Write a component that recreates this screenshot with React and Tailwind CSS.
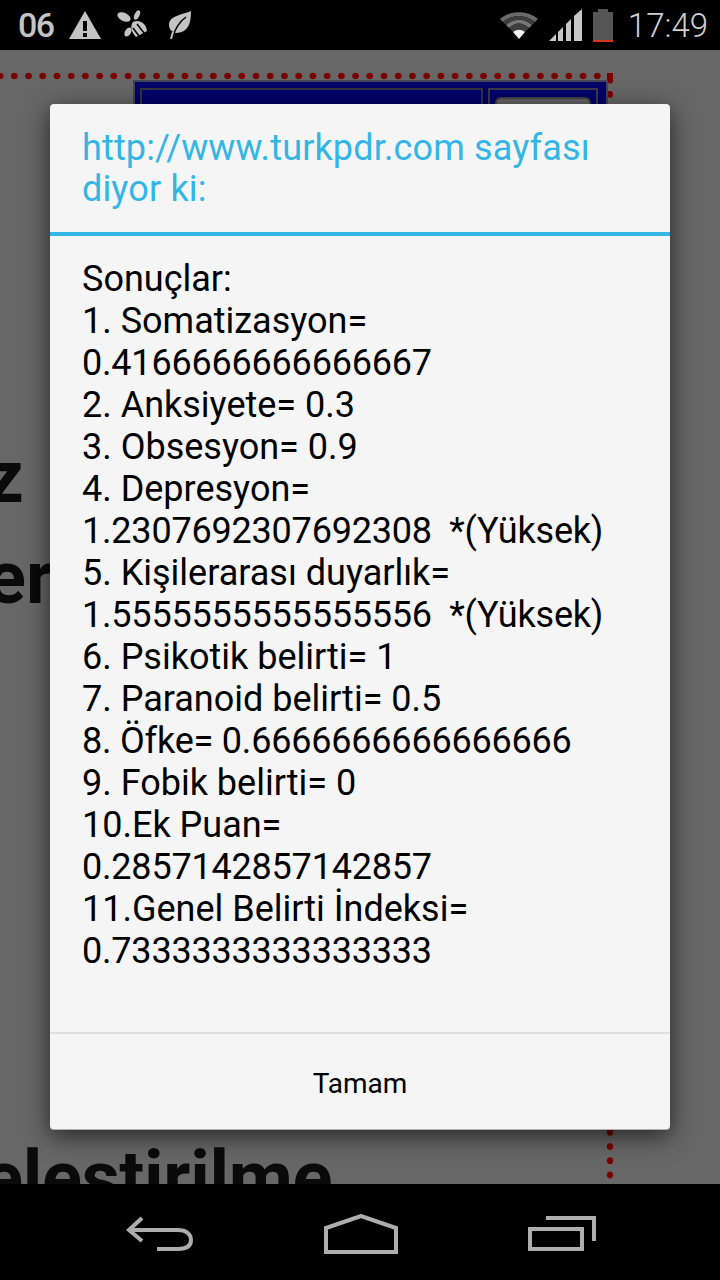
import React from "react";

const lines = [
  "Sonuçlar:",
  "1. Somatizasyon=",
  "0.4166666666666667",
  "2. Anksiyete= 0.3",
  "3. Obsesyon= 0.9",
  "4. Depresyon=",
  "1.2307692307692308  *(Yüksek)",
  "5. Kişilerarası duyarlık=",
  "1.5555555555555556  *(Yüksek)",
  "6. Psikotik belirti= 1",
  "7. Paranoid belirti= 0.5",
  "8. Öfke= 0.6666666666666666",
  "9. Fobik belirti= 0",
  "10.Ek Puan=",
  "0.2857142857142857",
  "11.Genel Belirti İndeksi=",
  "0.7333333333333333",
];

const StatusBar = () => (
  <div className="flex h-[50px] shrink-0 items-center justify-between bg-black pl-[18px] pr-[12px] text-[#c4c4c4]">
    <div className="flex items-center">
      <span className="text-[34px] font-medium leading-none tracking-[-1.5px]">06</span>
      <svg className="ml-[14px]" width="34" height="30" viewBox="0 0 34 30">
        <path d="M17 1 33 29H1Z" fill="#c4c4c4" />
        <rect x="15" y="11" width="4" height="10" fill="#000" />
        <rect x="15" y="23" width="4" height="4" fill="#000" />
      </svg>
      <svg className="ml-[15px]" width="32" height="30" viewBox="0 0 32 30" fill="#c4c4c4">
        <ellipse cx="7" cy="7" rx="7" ry="4" transform="rotate(25 7 7)" />
        <ellipse cx="20" cy="5" rx="2.5" ry="5" transform="rotate(25 20 5)" />
        <path d="M16 12C22 9 29 13 30 21L19 27C14 22 13 16 16 12Z" />
        <path d="M20 14 27 23M16 18 22 26" stroke="#000" strokeWidth="1.5" />
        <ellipse cx="11" cy="22" rx="3" ry="5" transform="rotate(30 11 22)" />
      </svg>
      <svg className="ml-[19px]" width="24" height="30" viewBox="0 0 24 30">
        <path d="M23 1C23 14 20 22 9 23 4 23 1 19 1 15 1 6 13 5 23 1Z" fill="#c4c4c4" />
        <path d="M18 7C11 12 7 18 4 29" fill="none" stroke="#000" strokeWidth="1.5" />
        <path d="M5 22 3 29" stroke="#c4c4c4" strokeWidth="2" />
      </svg>
    </div>
    <div className="flex items-center">
      <svg width="40" height="30" viewBox="0 0 40 30">
        <path d="M1 9C11 0 29 0 39 9L36 12C26 4 14 4 4 12Z" fill="#6a6a6a" />
        <path d="M7 15C15 8 25 8 33 15L30 18C23 12 17 12 10 18Z" fill="#777" />
        <path d="M4 12C14 4 26 4 36 12L33 15C25 8 15 8 7 15ZM10 18C17 12 23 12 30 18L26 22C22 19 18 19 14 22Z" fill="#3e3e3e" />
        <path d="M14 22C18 19 22 19 26 22L20 29Z" fill="#f0f0f0" />
      </svg>
      <svg className="ml-[10px]" width="34" height="33" viewBox="0 0 34 33" fill="#c8c8c8">
        <path d="M0 32 7 25V32ZM9 23 14 18V32H9ZM17 15 22 10V32H17ZM25 7 33 0V32H25Z" />
      </svg>
      <div className="ml-[10px] flex flex-col items-center">
        <div className="h-[3px] w-[10px] bg-[#555]" />
        <div className="flex h-[30px] w-[20px] flex-col justify-end bg-[#555]">
          <div className="h-[2px] bg-[#d9331f]" />
        </div>
      </div>
      <span className="ml-[15px] text-[33px] font-light leading-none text-[#d0d0d0]">17:49</span>
    </div>
  </div>
);

const Page = () => (
  <div className="relative flex-1 overflow-hidden bg-[#676767]">
    <div className="absolute left-[-7px] top-[19px] h-[14px] w-[611px] bg-[radial-gradient(circle,#7a0000_3px,transparent_3.6px)] bg-[length:14.22px_14px]" />
    <div className="absolute left-[603px] top-[23px] h-[1111px] w-[14px] bg-[radial-gradient(circle,#7a0000_3px,transparent_3.6px)] bg-[length:14px_14.22px]" />
    <div className="absolute left-[607px] top-[23px] h-[9px] w-[6px] rounded-b-[3px] bg-[#7a0000]" />
    <div className="absolute left-[133px] top-[30px] flex h-[70px] w-[475px] gap-[5px] border-2 border-[#444455] bg-[#00006a] pl-[5px] pr-[8px] pt-[6px]">
      <div className="w-[343px] border-2 border-[#333340]" />
      <div className="flex-1 border-2 border-[#3c3c48] px-[5px] pt-[7px]">
        <div className="h-full rounded-[6px] border-2 border-[#444] bg-[#666]" />
      </div>
    </div>
    <div className="absolute left-0 top-[390px] text-[74px] font-bold leading-none text-[#0a0a0a]">
      <span className="absolute left-[-14px] top-0">z</span>
      <span className="absolute left-[-14px] top-[101px]">er</span>
    </div>
    <div className="absolute left-[-17px] top-[1091px] whitespace-nowrap text-[74px] font-bold leading-none tracking-[-0.3px] text-[#0a0a0a]">
      elestirilme
    </div>
  </div>
);

const Dialog = () => (
  <div className="absolute left-[50px] top-[104px] flex h-[1026px] w-[620px] flex-col rounded-[4px] border-b border-[#b0b0b0] bg-[#f5f5f5] shadow-[0_6px_24px_rgba(0,0,0,0.65)]">
    <div className="flex h-[132px] flex-col justify-center border-b-[4px] border-[#33b5e5] px-[32px] pt-[2px] text-[36px] leading-[41px] tracking-[0.15px] text-[#33b5e5]">
      <div>http://www.turkpdr.com sayfası</div>
      <div>diyor ki:</div>
    </div>
    <div className="flex-1 whitespace-pre px-[32px] pt-[22px] text-[36px] leading-[42px] text-black">
      {lines.map(line => (
        <div key={line} className={/\d{10}/.test(line) ? "tracking-[-0.2px]" : ""}>
          {line}
        </div>
      ))}
    </div>
    <div className="flex h-[97px] items-center justify-center border-t-2 border-[#dedede] pt-[5px] text-[28px] text-black">
      Tamam
    </div>
  </div>
);

const NavBar = () => (
  <div className="flex h-[96px] shrink-0 items-center bg-black text-[#adadad]">
    <svg className="ml-[126px] mt-[4px]" width="68" height="36" viewBox="0 0 68 36" fill="none" stroke="#adadad" strokeWidth="4">
      <path d="M16 2 3 14 16 25M3 14H52C60 14 65 18 65 24 65 30 60 33 52 33H31" />
    </svg>
    <svg className="ml-[130px] mt-[4px]" width="74" height="40" viewBox="0 0 74 40" fill="none" stroke="#adadad" strokeWidth="4">
      <path d="M2 38V14L37 2 72 14V38Z" />
    </svg>
    <svg className="ml-[130px] mt-[4px]" width="70" height="36" viewBox="0 0 70 36" fill="none" stroke="#adadad" strokeWidth="4">
      <path d="M2 13H54V33H2ZM18 2H66V25" />
    </svg>
  </div>
);

const App = () => (
  <div className="relative flex h-[1280px] w-[720px] flex-col overflow-hidden font-['Roboto',sans-serif]">
    <StatusBar />
    <Page />
    <NavBar />
    <Dialog />
  </div>
);

export default App;
